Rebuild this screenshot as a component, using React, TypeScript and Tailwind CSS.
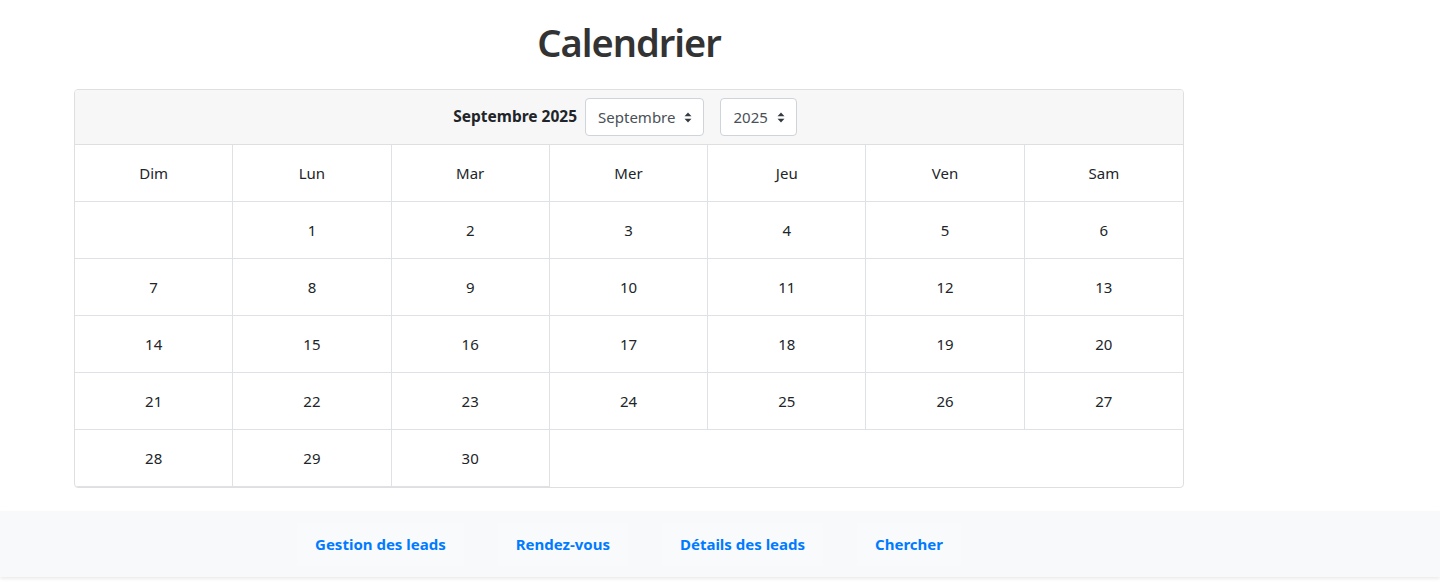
const days = ["Dim", "Lun", "Mar", "Mer", "Jeu", "Ven", "Sam"];

// septembre 2025 starts on a monday
const cells: (number | null)[] = [null, ...Array.from({ length: 30 }, (_, i) => i + 1)];
const rows: (number | null)[][] = [];
for (let i = 0; i < cells.length; i += 7) rows.push(cells.slice(i, i + 7));

const links = ["Gestion des leads", "Rendez-vous", "Détails des leads", "Chercher"];

function Caret() {
  return (
    <svg width="8" height="11" viewBox="0 0 8 11" className="ml-[9px]">
      <path d="M4 0.5 L7.5 4.2 H0.5 Z" fill="#343a40" />
      <path d="M4 10.5 L7.5 6.8 H0.5 Z" fill="#343a40" />
    </svg>
  );
}

function FakeSelect({ value }: { value: string }) {
  return (
    <div className="flex h-[38px] items-center rounded-[4px] border border-[#ced4da] bg-white pl-3 pr-[11px] text-[15px] text-[#495057]">
      {value}
      <Caret />
    </div>
  );
}

export default function App() {
  return (
    <div className="min-h-[586px] w-full bg-white font-['Noto_Sans',sans-serif] text-[#212529]">
      <div className="ml-[74px] w-[1110px]">
        <h1 className="flex h-[89px] items-center justify-center pb-[4px] text-[38px] font-semibold tracking-[-1px] text-[#333]">
          Calendrier
        </h1>

        <div className="overflow-hidden rounded-[4px] border border-[#dfdfdf]">
          <div className="flex h-[55px] items-center justify-center border-b border-[#dfdfdf] bg-[#f7f7f8] pr-[8px]">
            <span className="mr-2 text-[15.5px] font-bold text-[#212529]">Septembre 2025</span>
            <FakeSelect value="Septembre" />
            <div className="w-4" />
            <FakeSelect value="2025" />
          </div>

          <div className="grid grid-cols-7">
            {days.map((d, i) => (
              <div
                key={d}
                className={`flex h-[57px] items-center justify-center border-b border-[#dee2e6] text-[15px] ${i < 6 ? "border-r" : ""}`}
              >
                {d}
              </div>
            ))}
            {rows.map((row, r) =>
              row.map((n, i) => (
                <div
                  key={`${r}-${i}`}
                  className={`flex h-[57px] items-center justify-center border-b border-[#dee2e6] text-[15px] ${i < 6 ? "border-r" : ""}`}
                >
                  {n ?? ""}
                </div>
              ))
            )}
          </div>
        </div>
      </div>

      <div className="mt-[23px] flex h-[66px] items-center bg-[#f8f9fa] shadow-[0_2px_3px_rgba(0,0,0,0.08)]">
        <nav className="ml-[74px] flex w-[1110px] items-center justify-center gap-[34px]">
          {links.map((l) => (
            <a
              key={l}
              href="#"
              className="flex h-[43px] items-center bg-[#f9fafc] px-[18px] text-[15px] font-bold text-[#007bff]"
            >
              {l}
            </a>
          ))}
        </nav>
      </div>
    </div>
  );
}
